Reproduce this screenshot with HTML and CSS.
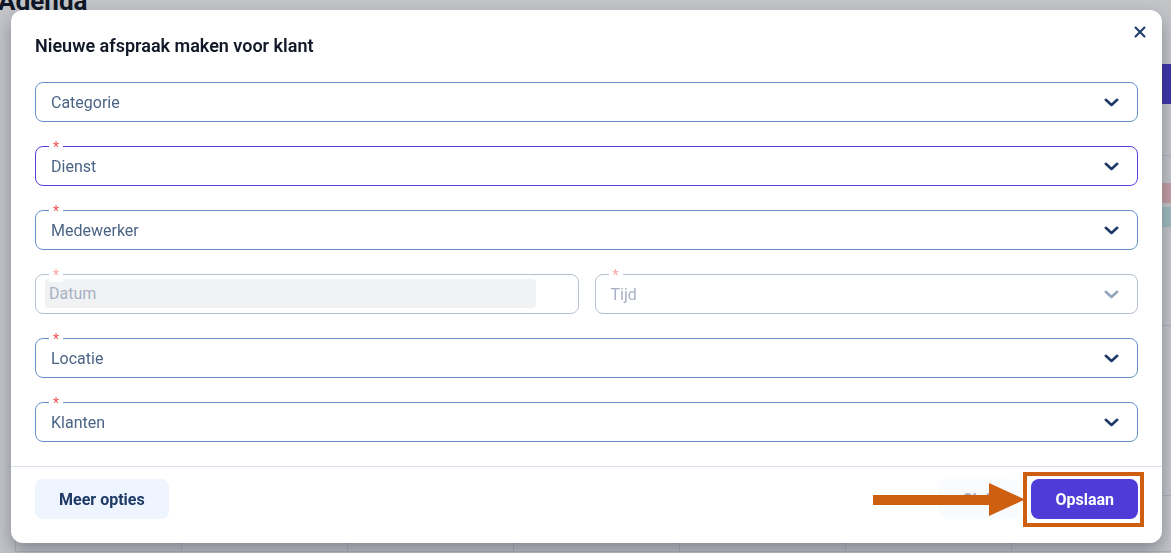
FILE: index.html
```html
<!DOCTYPE html>
<html lang="nl">
<head>
    <meta charset="UTF-8">
    <meta name="viewport" content="width=device-width, initial-scale=1.0">
    <title>Agenda</title>
    <link rel="stylesheet" href="styles.css">
</head>
<body>
    <div class="page">
        <header class="page-header">
            <h1>Agenda</h1>
        </header>
        <div class="toolbar">
            <button class="btn-new">Nieuwe afspraak</button>
        </div>
        <div class="calendar">
            <div class="day-head">Ma</div>
            <div class="day-head">Di</div>
            <div class="day-head">Wo</div>
            <div class="day-head">Do</div>
            <div class="day-head">Vr</div>
            <div class="day-head">Za</div>
            <div class="day-head">Zo</div>
            <div class="cell"></div>
            <div class="cell"></div>
            <div class="cell"></div>
            <div class="cell"></div>
            <div class="cell"></div>
            <div class="cell"></div>
            <div class="cell">
                <div class="event event-red"></div>
                <div class="event event-teal"></div>
            </div>
            <div class="cell"></div>
            <div class="cell"></div>
            <div class="cell"></div>
            <div class="cell"></div>
            <div class="cell"></div>
            <div class="cell"></div>
            <div class="cell"></div>
            <div class="cell"></div>
            <div class="cell"></div>
            <div class="cell"></div>
            <div class="cell"></div>
            <div class="cell"></div>
            <div class="cell"></div>
            <div class="cell"></div>
        </div>
    </div>

    <div class="overlay">
        <div class="modal">
            <button class="close" aria-label="Sluiten">
                <svg width="12" height="12" viewBox="0 0 12 12">
                    <path d="M1.5 1.5 L10.5 10.5 M10.5 1.5 L1.5 10.5" stroke="#1e3a66" stroke-width="2" stroke-linecap="round" fill="none"/>
                </svg>
            </button>

            <h2 class="modal-title">Nieuwe afspraak maken voor klant</h2>

            <div class="modal-body">
                <div class="field">
                    <span class="value">Categorie</span>
                    <svg class="chevron" width="15" height="9" viewBox="0 0 15 9"><path d="M1.8 1.8 L7.5 7 L13.2 1.8" /></svg>
                </div>

                <div class="field field-focus">
                    <span class="req">*</span>
                    <span class="value">Dienst</span>
                    <svg class="chevron" width="15" height="9" viewBox="0 0 15 9"><path d="M1.8 1.8 L7.5 7 L13.2 1.8" /></svg>
                </div>

                <div class="field">
                    <span class="req">*</span>
                    <span class="value">Medewerker</span>
                    <svg class="chevron" width="15" height="9" viewBox="0 0 15 9"><path d="M1.8 1.8 L7.5 7 L13.2 1.8" /></svg>
                </div>

                <div class="field-row">
                    <div class="field field-disabled field-date">
                        <span class="req">*</span>
                        <span class="input-fill">Datum</span>
                    </div>
                    <div class="field field-disabled">
                        <span class="req">*</span>
                        <span class="value">Tijd</span>
                        <svg class="chevron" width="15" height="9" viewBox="0 0 15 9"><path d="M1.8 1.8 L7.5 7 L13.2 1.8" /></svg>
                    </div>
                </div>

                <div class="field">
                    <span class="req">*</span>
                    <span class="value">Locatie</span>
                    <svg class="chevron" width="15" height="9" viewBox="0 0 15 9"><path d="M1.8 1.8 L7.5 7 L13.2 1.8" /></svg>
                </div>

                <div class="field">
                    <span class="req">*</span>
                    <span class="value">Klanten</span>
                    <svg class="chevron" width="15" height="9" viewBox="0 0 15 9"><path d="M1.8 1.8 L7.5 7 L13.2 1.8" /></svg>
                </div>
            </div>

            <div class="modal-footer">
                <button class="btn btn-light">Meer opties</button>
                <div class="footer-actions">
                    <button class="btn btn-light btn-faded">Sluit</button>
                    <button class="btn btn-primary">Opslaan</button>
                </div>
            </div>

            <!-- callout around the save button -->
            <div class="callout-box"></div>
            <svg class="callout-arrow" width="152" height="33" viewBox="0 0 152 33">
                <rect x="0" y="12" width="118" height="10" fill="#cf5f10"/>
                <polygon points="116,0 152,16.5 116,33" fill="#cf5f10"/>
            </svg>
        </div>
    </div>
</body>
</html>
```

FILE: styles.css
```css
* {
    box-sizing: border-box;
}
body {
    margin: 0;
    height: 100vh;
    overflow: hidden;
    background-color: #ffffff;
    font-family: Roboto, "Liberation Sans", Arial, sans-serif;
    color: #111827;
}

/* page behind the dialog */
.page {
    padding-left: 15px;
    height: 100vh;
    overflow: hidden;
}
.page-header h1 {
    margin: -14px 0 0 -17px;
    font-size: 26px;
    line-height: 30px;
    font-weight: 700;
    color: #111827;
}
.toolbar {
    display: flex;
    justify-content: flex-end;
    padding-top: 48px;
}
.btn-new {
    height: 40px;
    width: 170px;
    border: none;
    background-color: #4f3fd6;
    color: white;
    font-family: inherit;
    font-size: 15px;
    font-weight: 700;
}
.calendar {
    margin-top: 16px;
    display: grid;
    grid-template-columns: repeat(7, 166px);
    grid-template-rows: 36px 170px 170px 56px;
    border-left: 1px solid #e5e7eb;
}
.day-head {
    border-right: 1px solid #e5e7eb;
    border-bottom: 1px solid #e5e7eb;
    font-size: 13px;
    color: #6b7280;
    padding: 10px 8px;
}
.cell {
    border-right: 1px solid #e5e7eb;
    border-bottom: 1px solid #e5e7eb;
    padding: 27px 4px 0 8px;
    display: flex;
    flex-direction: column;
    gap: 4px;
}
.event {
    height: 20px;
    border-radius: 3px;
}
.event-red {
    background-color: #ffccd0;
}
.event-teal {
    background-color: #cff3f1;
}

/* dialog */
.overlay {
    position: fixed;
    inset: 0;
    background-color: rgba(17, 24, 39, 0.25);
    padding: 10px 9px 10px 11px;
    display: flex;
}
.modal {
    position: relative;
    width: 1151px;
    height: 533px;
    background-color: #ffffff;
    border-radius: 12px;
    box-shadow: 0 8px 18px rgba(17, 24, 39, 0.35);
    display: flex;
    flex-direction: column;
}
.close {
    position: absolute;
    top: 12px;
    right: 12px;
    width: 20px;
    height: 20px;
    padding: 0;
    border: none;
    background: none;
    display: flex;
    align-items: center;
    justify-content: center;
    cursor: pointer;
}
.modal-title {
    margin: 0;
    padding: 24px 24px 0;
    font-size: 18px;
    line-height: 24px;
    font-weight: 600;
    color: #111827;
}
.modal-body {
    padding: 24px;
    display: flex;
    flex-direction: column;
    gap: 24px;
}
.field-row {
    display: grid;
    grid-template-columns: 1fr 1fr;
    gap: 16px;
}
.field {
    position: relative;
    height: 40px;
    border: 1px solid #6591c8;
    border-radius: 8px;
    padding: 0 18px 0 15px;
    display: flex;
    align-items: center;
    justify-content: space-between;
}
.field-focus {
    border-color: #4f3fdc;
}
.field-disabled {
    border-color: #b6c1cf;
}
.value {
    font-size: 16px;
    color: #4b6486;
}
.field-disabled .value {
    color: #a6b2c3;
}
.req {
    position: absolute;
    top: -7px;
    left: 13px;
    padding: 0 4px;
    height: 14px;
    background-color: #ffffff;
    font-size: 14px;
    line-height: 14px;
    color: #f05252;
}
.field-disabled .req {
    color: #f8a4a4;
}
.chevron {
    fill: none;
    stroke: #1e3a6a;
    stroke-width: 2.6;
    stroke-linecap: round;
    stroke-linejoin: round;
}
.field-disabled .chevron {
    stroke: #95a5bb;
}
.field-date {
    padding: 4px 0 5px 9px;
    justify-content: flex-start;
    align-items: stretch;
}
.input-fill {
    width: 491px;
    background-color: #f1f2f4;
    border-radius: 4px;
    padding-left: 4px;
    display: flex;
    align-items: center;
    font-size: 16px;
    color: #a6b2c3;
}
.field-date .req {
    z-index: 1;
}

.modal-footer {
    border-top: 1px solid #d5e0ec;
    padding: 12px 24px 24px;
    display: flex;
    justify-content: space-between;
}
.footer-actions {
    display: flex;
    gap: 12px;
}
.btn {
    height: 40px;
    padding: 0 24px;
    border: none;
    border-radius: 8px;
    font-family: inherit;
    font-size: 16px;
    font-weight: 700;
    cursor: pointer;
}
.btn-light {
    background-color: #eff5fe;
    color: #1e3a66;
}
.btn-faded {
    opacity: 0.4;
}
.btn-primary {
    background-color: #4e3bd8;
    color: #ffffff;
}

/* annotation */
.callout-box {
    position: absolute;
    left: 1012px;
    top: 462px;
    width: 121px;
    height: 55px;
    border: 4px solid #cf5f10;
}
.callout-arrow {
    position: absolute;
    left: 862px;
    top: 473px;
}
```
